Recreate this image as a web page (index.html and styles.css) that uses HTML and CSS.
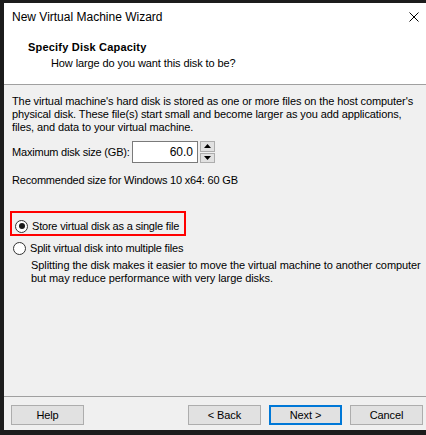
FILE: index.html
```html
<!DOCTYPE html>
<html>
<head>
<meta charset="utf-8">
<link rel="stylesheet" href="styles.css">
</head>
<body>
<div class="window">
  <div class="titlebar">
    <span class="title">New Virtual Machine Wizard</span>
    <svg class="close" width="10" height="10" viewBox="0 0 10 10"><path d="M0.5 0.5 L9.5 9.5 M9.5 0.5 L0.5 9.5" stroke="#000" stroke-width="1" fill="none"/></svg>
  </div>
  <div class="header">
    <div class="heading">Specify Disk Capacity</div>
    <div class="subheading">How large do you want this disk to be?</div>
  </div>
  <div class="content">
    <p class="intro">The virtual machine's hard disk is stored as one or more files on the host computer's<br>physical disk. These file(s) start small and become larger as you add applications,<br>files, and data to your virtual machine.</p>
    <div class="size-row">
      <span class="label">Maximum disk size (GB):</span>
      <div class="number-box">60.0</div>
      <div class="spinner">
        <div class="spin-btn"><svg width="7" height="4" viewBox="0 0 7 4"><path d="M3.5 0 L7 4 L0 4 Z" fill="#000"/></svg></div>
        <div class="spin-btn"><svg width="7" height="4" viewBox="0 0 7 4"><path d="M0 0 L7 0 L3.5 4 Z" fill="#000"/></svg></div>
      </div>
    </div>
    <p class="recommend">Recommended size for Windows 10 x64: 60 GB</p>
    <div class="options">
      <div class="highlight">
        <label class="radio-row"><span class="radio checked"></span><span>Store virtual disk as a single file</span></label>
      </div>
      <label class="radio-row second"><span class="radio"></span><span>Split virtual disk into multiple files</span></label>
      <p class="desc">Splitting the disk makes it easier to move the virtual machine to another computer<br>but may reduce performance with very large disks.</p>
    </div>
  </div>
  <div class="footer">
    <button class="btn">Help</button>
    <div class="spacer"></div>
    <button class="btn">&lt; Back</button>
    <button class="btn default">Next &gt;</button>
    <button class="btn">Cancel</button>
  </div>
</div>
</body>
</html>
```

FILE: styles.css
```css
html, body {
  margin: 0;
  padding: 0;
  background: #1c1c1c;
  height: 435px;
  overflow: hidden;
}
.window {
  margin: 3px 0 0 4px;
  width: 422px;
  height: 427px;
  background: #f0f0f0;
  display: flex;
  flex-direction: column;
  font-family: "Liberation Sans", Arial, sans-serif;
  font-size: 11px;
  letter-spacing: -0.1px;
  color: #000;
  white-space: nowrap;
}
.titlebar {
  height: 28px;
  background: #fff;
  display: flex;
  align-items: center;
  padding: 0 7px 0 8px;
}
.title {
  font-size: 12px;
  letter-spacing: 0;
  flex: 1;
  color: #000;
}
.close {
  display: block;
}
.header {
  height: 54px;
  background: #fff;
  border-bottom: 1px solid #a0a0a0;
  padding: 9px 0 0 24px;
  box-sizing: border-box;
}
.heading {
  font-weight: bold;
  line-height: 14px;
  height: 14px;
  letter-spacing: 0.2px;
}
.subheading {
  line-height: 14px;
  margin-top: 2px;
  padding-left: 23px;
}
.content {
  flex: 1;
  padding: 10px 8px 0 8px;
  border-bottom: 1px solid #a0a0a0;
}
.intro {
  margin: 0;
  line-height: 13px;
}
.size-row {
  display: flex;
  align-items: center;
  margin-top: 7px;
  height: 22px;
  letter-spacing: -0.2px;
}
.label {
  width: 120px;
}
.number-box {
  width: 64px;
  height: 20px;
  border: 1px solid #7a7a7a;
  background: #fff;
  text-align: right;
  line-height: 20px;
  font-size: 12px;
  letter-spacing: 0;
}
.number-box::after {
  content: "";
  display: inline-block;
  width: 4px;
}
.spinner {
  margin-left: 2px;
  display: flex;
  flex-direction: column;
  gap: 1px;
  height: 22px;
}
.spin-btn {
  width: 13px;
  height: 9px;
  border: 1px solid #adadad;
  background: #e1e1e1;
  display: flex;
  align-items: center;
  justify-content: center;
}
.spin-btn svg { display: block; }
.recommend {
  margin: 11px 0 0 0;
  line-height: 13px;
  letter-spacing: -0.2px;
}
.options {
  margin-top: 24px;
  letter-spacing: -0.2px;
}
.highlight {
  width: 172px;
  height: 20px;
  border: 2px solid #ff0000;
  margin-left: -2px;
  display: flex;
  align-items: flex-end;
  padding-bottom: 1px;
}
.radio-row {
  display: flex;
  align-items: center;
  height: 14px;
  line-height: 14px;
}
.highlight .radio-row {
  padding-left: 3px;
}
.radio-row.second {
  margin-top: 5px;
  padding-left: 1px;
}
.radio {
  width: 11px;
  height: 11px;
  border: 1px solid #333;
  border-radius: 50%;
  background: #fff;
  margin-right: 4px;
  position: relative;
  flex: none;
}
.radio.checked::after {
  content: "";
  position: absolute;
  left: 2.5px;
  top: 2.5px;
  width: 6px;
  height: 6px;
  border-radius: 50%;
  background: #1a1a1a;
}
.desc {
  margin: 4px 0 0 19px;
  line-height: 13px;
  letter-spacing: -0.08px;
}
.footer {
  height: 33px;
  display: flex;
  align-items: flex-start;
  padding: 8px 3px 0 7px;
  gap: 8px;
  box-sizing: border-box;
}
.spacer { flex: 1; }
.btn {
  width: 73px;
  height: 20px;
  border: 1px solid #adadad;
  background: #e1e1e1;
  font-family: "Liberation Sans", Arial, sans-serif;
  font-size: 11px;
  letter-spacing: -0.1px;
  color: #000;
  padding: 0;
  margin: 0;
}
.btn.default {
  border: 2px solid #0078d7;
}
```
